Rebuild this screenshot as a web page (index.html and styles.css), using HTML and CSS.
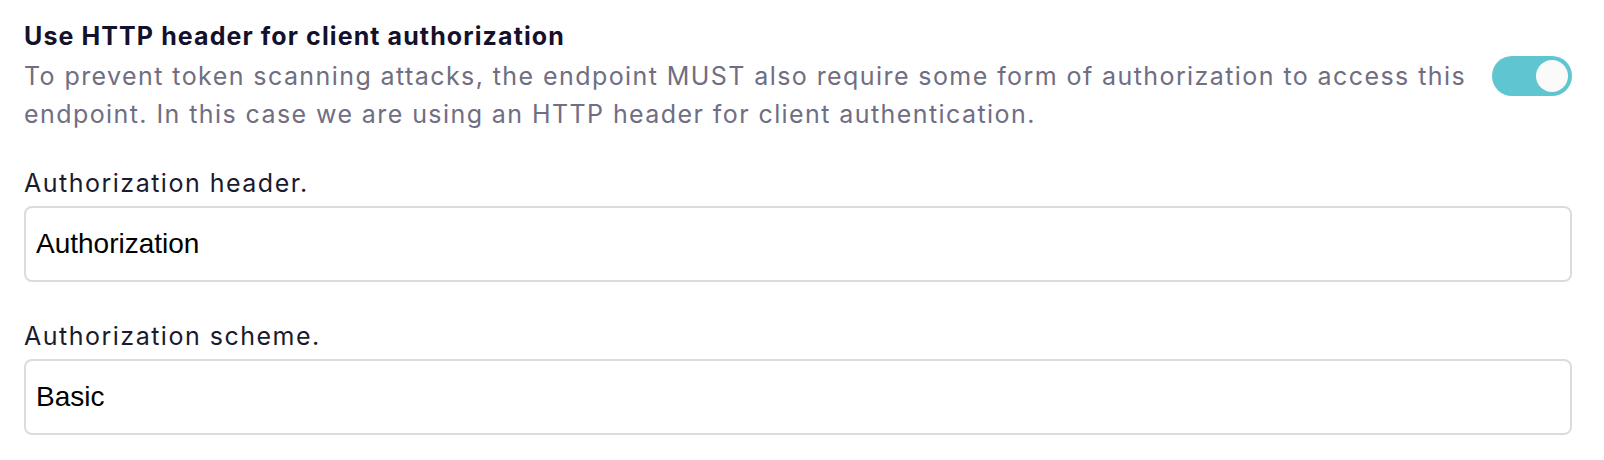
FILE: index.html
```html
<!DOCTYPE html>
<html>
<head>
<meta charset="utf-8">
<link rel="stylesheet" href="styles.css">
</head>
<body>
<div class="page">
  <div class="setting">
    <div class="setting-text">
      <div class="title">Use HTTP header for client authorization</div>
      <div class="desc">To prevent token scanning attacks, the endpoint MUST also require some form of authorization to access this endpoint. In this case we are using an HTTP header for client authentication.</div>
    </div>
    <div class="toggle"><div class="knob"></div></div>
  </div>
  <div class="field first">
    <label class="label">Authorization header.</label>
    <input class="input" type="text" value="Authorization">
  </div>
  <div class="field">
    <label class="label">Authorization scheme.</label>
    <input class="input" type="text" value="Basic">
  </div>
</div>
</body>
</html>
```

FILE: styles.css
```css
html, body { margin: 0; padding: 0; background: #fff; }
.page { padding: 19px 32px 0 24px; font-family: Inter, "Noto Sans", sans-serif; }
.setting { display: flex; align-items: flex-start; justify-content: space-between; gap: 12px; }
.setting-text { flex: 1; }
.title { font-size: 25px; font-weight: 700; line-height: 34px; color: #13112b; letter-spacing: 1.1px; }
.desc { font-size: 25px; line-height: 38px; color: #6f6e82; letter-spacing: 1.42px; margin-top: 4px; }
.toggle { width: 80px; height: 40px; margin-top: 37px; border-radius: 20px; background: #5fc6d1; display: flex; align-items: center; justify-content: flex-end; padding: 0 4px; box-sizing: border-box; flex-shrink: 0; }
.knob { width: 32px; height: 32px; border-radius: 50%; background: #fafafa; }
.field { display: flex; flex-direction: column; margin-top: 38px; }
.field.first { margin-top: 34px; }
.label { font-size: 25px; line-height: 32px; color: #1b1a2e; letter-spacing: 1.5px; margin-bottom: 7px; }
.input { height: 76px; box-sizing: border-box; border: 2px solid #dcdcdc; border-radius: 8px; padding: 0 10px; font-family: "Liberation Sans", Arial, sans-serif; font-size: 28px; color: #000; outline: none; }
```
